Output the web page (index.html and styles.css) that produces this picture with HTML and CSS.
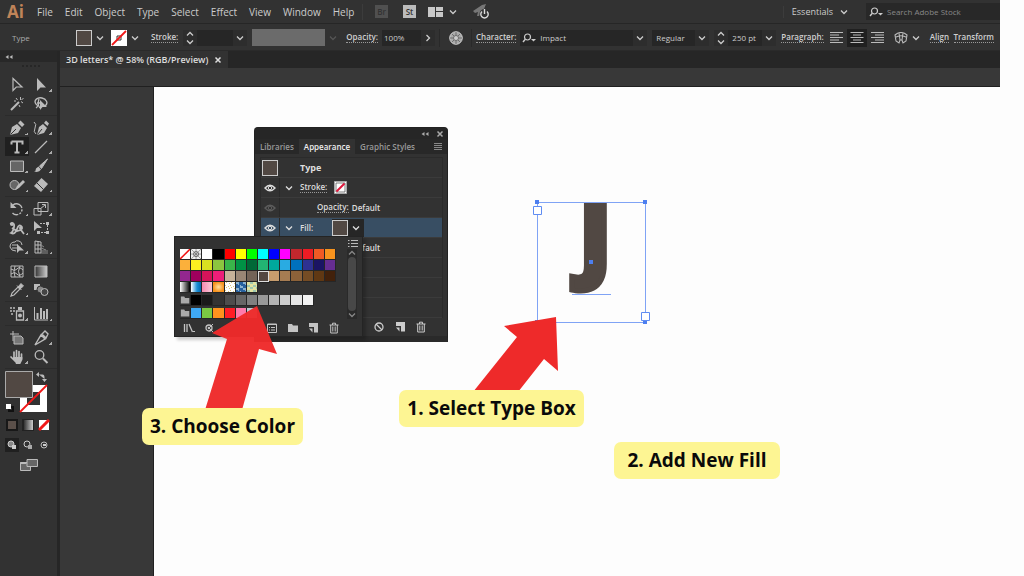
FILE: index.html
```html
<!DOCTYPE html>
<html lang="en">
<head>
<meta charset="utf-8">
<title>3D letters</title>
<link rel="stylesheet" href="styles.css">
</head>
<body>
<svg class="defs" aria-hidden="true">
  <defs>
    <linearGradient id="fade"><stop offset="0" stop-color="#333"/><stop offset="1" stop-color="#ccc"/></linearGradient>
    <symbol id="chev" viewBox="0 0 8 8"><path d="M1 2.5 4 5.5 7 2.5" fill="none" stroke="currentColor" stroke-width="1.3"/></symbol>
    <symbol id="step" viewBox="0 0 8 14"><path d="M1 4.5 4 1.5 7 4.5M1 9.5 4 12.5 7 9.5" fill="none" stroke="currentColor" stroke-width="1.3"/></symbol>
    <symbol id="lens" viewBox="0 0 14 10"><circle cx="5.5" cy="4" r="3" fill="none" stroke="currentColor" stroke-width="1.2"/><path d="M3.300 6.200 1 9" stroke="currentColor" stroke-width="1.400"/><path d="M9 6h5l-2.500 2.500z" fill="currentColor"/></symbol>
    <symbol id="eye" viewBox="0 0 12 8"><path d="M1 4Q6-1.500 11 4 6 9.500 1 4z" fill="none" stroke="currentColor" stroke-width="1.400"/><circle cx="6" cy="4" r="1.700" fill="none" stroke="currentColor"/></symbol>
    <symbol id="back" viewBox="0 0 8 6"><path d="M3.500 1v4L.5 3zM7.500 1v4l-3-2z" fill="currentColor"/></symbol>
    <symbol id="close" viewBox="0 0 8 8"><path d="M1.500 1.500l5 5M6.500 1.500l-5 5" stroke="currentColor" stroke-width="1.500"/></symbol>
    <symbol id="folder" viewBox="0 0 12 10"><path d="M1 1h4l1 1.500h5V9H1z" fill="currentColor"/></symbol>
    <symbol id="page" viewBox="0 0 12 12"><path d="M2 1h9v9.500H7V5H2z" fill="currentColor"/><path d="M2 6.500h3.500v4z" fill="currentColor"/></symbol>
    <symbol id="trash" viewBox="0 0 12 12"><path d="M1.500 3h9M4.500 3V1.200h3V3M2.700 3v8h6.600V3M4.800 4.500v5M7.200 4.500v5" fill="none" stroke="currentColor"/></symbol>
  </defs>
</svg>

<header class="menubar">
  <span class="logo">Ai</span>
  <nav class="menus" aria-label="Main menu">
    <button>File</button><button>Edit</button><button>Object</button><button>Type</button><button>Select</button><button>Effect</button><button>View</button><button>Window</button><button>Help</button>
  </nav>
  <div class="launch">
    <button class="app dim">Br</button>
    <button class="app">St</button>
    <button aria-label="Arrange documents" class="arrange"><svg width="15" height="10" viewBox="0 0 15 10"><path d="M0 0h7v10H0zM8 0h7v4H8zM8 5h7v5H8z" fill="#c8c8c8"/></svg><svg width="8" height="8"><use href="#chev"/></svg></button>
    <button aria-label="GPU performance"><svg width="18" height="16" viewBox="0 0 18 16"><path d="M1 7 10 1 14 0 12 5 7 12 5 12 6 8 3 9z" fill="#777"/><circle cx="12.500" cy="10" r="5" fill="#323232"/><path d="M10 7.500a3.700 3.700 0 1 0 5 0M12.500 5v5" fill="none" stroke="#ddd" stroke-width="1.400"/></svg></button>
  </div>
  <button class="essentials">Essentials <svg width="8" height="8"><use href="#chev"/></svg></button>
  <label class="search"><svg width="14" height="10"><use href="#lens"/></svg><input type="search" placeholder="Search Adobe Stock" aria-label="Search Adobe Stock"></label>
</header>

<div class="options">
  <span class="kind">Type</span>
  <button class="pick" aria-label="Fill"><i class="chip brown"></i><svg width="8" height="8"><use href="#chev"/></svg></button>
  <button class="pick" aria-label="Stroke colour"><svg class="none" width="16" height="16" viewBox="0 0 16 16"><path d="M0 0h16v16H0z" fill="#fff"/><path d="M6 6h4v4H6z" fill="none" stroke="#333"/><path d="M1 15 15 1" stroke="#f01818" stroke-width="1.800"/></svg><svg width="8" height="8"><use href="#chev"/></svg></button>
  <label class="cap" for="weight">Stroke:</label>
  <div class="field weight"><button aria-label="Step weight"><svg width="8" height="14"><use href="#step"/></svg></button><input id="weight"><button aria-label="Weights"><svg width="8" height="8"><use href="#chev"/></svg></button></div>
  <div class="profile"><span></span><svg width="8" height="8"><use href="#chev"/></svg></div>
  <label class="cap" for="opacity">Opacity:</label>
  <div class="field opacity"><input id="opacity" value="100%"><button aria-label="More opacity"><svg class="right" width="8" height="8"><use href="#chev"/></svg></button></div>
  <button class="globe" aria-label="Recolor artwork"><svg width="14" height="14" viewBox="0 0 14 14"><circle cx="7" cy="7" r="6.300" fill="#aaa" stroke="#ccc"/><path d="M7 1v12M1 7h12M3 3l8 8M11 3l-8 8" stroke="#555" stroke-width=".7"/><circle cx="7" cy="7" r="2.500" fill="#ccc" stroke="#555" stroke-width=".7"/></svg></button>
  <label class="cap" for="font">Character:</label>
  <div class="field font"><svg width="14" height="10"><use href="#lens"/></svg><input id="font" value="Impact"><button aria-label="Fonts"><svg width="8" height="8"><use href="#chev"/></svg></button></div>
  <div class="field style"><select aria-label="Font style"><option>Regular</option></select><span class="drop"><svg width="8" height="8"><use href="#chev"/></svg></span></div>
  <div class="field size"><button aria-label="Step size"><svg width="8" height="14"><use href="#step"/></svg></button><input aria-label="Font size" value="250 pt"><button aria-label="Sizes"><svg width="8" height="8"><use href="#chev"/></svg></button></div>
  <button class="cap">Paragraph:</button>
  <div class="aligns">
    <button aria-label="Align left"><svg width="14" height="12" viewBox="0 0 14 12"><path d="M0 .5h13M0 3h9M0 5.500h13M0 8h9M0 10.500h13" stroke="#bbb"/></svg></button>
    <button aria-label="Align centre" class="on"><svg width="14" height="12" viewBox="0 0 14 12"><path d="M.5 .5h13M3 3h8M.5 5.500h13M3 8h8M.5 10.500h13" stroke="#bbb"/></svg></button>
    <button aria-label="Align right"><svg width="14" height="12" viewBox="0 0 14 12"><path d="M1 .5h13M5 3h9M1 5.500h13M5 8h9M1 10.500h13" stroke="#bbb"/></svg></button>
  </div>
  <button class="warp" aria-label="Envelope"><svg width="14" height="12" viewBox="0 0 14 12"><path d="M1 3Q7-2 13 3L12 9 9 11 8 8H6L5 11 2 9zM5 1 6 8M9 1 8 8M1 5.500Q7 2 13 5.500" fill="none" stroke="#bbb" stroke-width="1.100"/></svg><svg width="8" height="8"><use href="#chev"/></svg></button>
  <button class="cap">Align</button>
  <button class="cap">Transform</button>
</div>

<main class="work">
  <aside class="tools">
    <div class="collapse"><svg width="8" height="6"><use href="#back"/></svg></div>
    <div class="grip"></div>
    <div class="group">
      <button aria-label="Selection"><svg viewBox="0 0 16 16"><path d="M4 1.500v12l3.300-3.500H13z" fill="none" stroke="currentColor" stroke-width="1.200"/></svg></button>
      <button aria-label="Direct selection" class="more"><svg viewBox="0 0 16 16"><path d="M4 1v13l3.500-3.500H13z" fill="currentColor"/></svg></button>
      <button aria-label="Magic wand"><svg viewBox="0 0 16 16"><path d="M2 14 10 6" stroke="currentColor" stroke-width="2"/><path d="M11.500 1v3M14 7l-2-1.500M7 2l1.500 2M14.500 2l-2 2M5 5h2M10 9l1 2" stroke="currentColor"/></svg></button>
      <button aria-label="Lasso"><svg viewBox="0 0 16 16"><path d="M3 12Q6 10 3 8C0 4 5 1 9 2S16 7 12 10M6 3Q4 9 7 12M4 7h5" fill="none" stroke="currentColor" stroke-width="1.300"/><path d="M7 4v10l2.500-3H14z" fill="currentColor"/></svg></button>
    </div>
    <div class="group">
      <button aria-label="Pen" class="more"><svg viewBox="0 0 16 16"><path d="M1 15 3 7 8 4l4 4-3 5zM9 3l2.500-2.500 4 4L13 7z" fill="currentColor"/><path d="M1.500 14.500 7 9" stroke="#323232"/></svg></button>
      <button aria-label="Curvature" class="more"><svg viewBox="0 0 16 16"><path d="M4 15 6 7l4-3 4 4-3 5zM11 3l2-2.500 3 3L14.500 6z" fill="currentColor"/><path d="M4.500 14.500 9 9" stroke="#323232"/><path d="M1 2Q4 4 2 8T3 14" fill="none" stroke="currentColor"/></svg></button>
      <button aria-label="Type" class="more on"><svg viewBox="0 0 16 16"><path d="M2.500 2.500h11v3M2.500 2.500v3M8 2.500v11M5.500 13.500h5" fill="none" stroke="currentColor" stroke-width="2"/></svg></button>
      <button aria-label="Line segment" class="more"><svg viewBox="0 0 16 16"><path d="M2 14 14 2" stroke="currentColor" stroke-width="1.300"/></svg></button>
      <button aria-label="Rectangle" class="more"><svg viewBox="0 0 16 16"><path d="M1.500 3h13v10.500h-13z" fill="#666" stroke="currentColor"/></svg></button>
      <button aria-label="Paintbrush" class="more"><svg viewBox="0 0 16 16"><path d="M14.500 1 6.500 8l2 2.500z" fill="currentColor" stroke="currentColor"/><path d="M5.500 8.500l2.500 3Q6 15 1 13.500q2-.5 2-3z" fill="currentColor"/></svg></button>
      <button aria-label="Shaper" class="more"><svg viewBox="0 0 16 16"><circle cx="5.500" cy="8" r="4.500" fill="#666" stroke="currentColor"/><path d="M6 13 8 9l6-6 2 2-6 6z" fill="currentColor"/></svg></button>
      <button aria-label="Eraser" class="more"><svg viewBox="0 0 16 16"><path d="M8.500 1 15 7 8 15 1 9z" fill="currentColor"/><path d="M4 6 10.500 12.500" stroke="#323232"/></svg></button>
    </div>
    <div class="group">
      <button aria-label="Rotate" class="more"><svg viewBox="0 0 16 16"><path d="M4 4a5.500 5.500 0 1 1-.5 8" fill="none" stroke="currentColor" stroke-width="1.400" stroke-dasharray="11 1.300 2 1.300 2 1.300"/><path d="M1.500 1v6h6z" fill="currentColor"/></svg></button>
      <button aria-label="Scale" class="more"><svg viewBox="0 0 16 16"><path d="M5 1.500h10v9H5zM1 7.500h7V14H1zM7 8l5-4M9 3.500h3.500V7" fill="none" stroke="currentColor"/></svg></button>
      <button aria-label="Width" class="more"><svg viewBox="0 0 16 16"><path d="M1 4Q6 2 5 7T2 13Q6 15 8 9T13 7M3 8l5 3 4-1 3 4" fill="none" stroke="currentColor" stroke-width="1.800"/><circle cx="3" cy="4" r="2" fill="currentColor"/><circle cx="12" cy="8" r="2" fill="currentColor"/></svg></button>
      <button aria-label="Free transform"><svg viewBox="0 0 16 16"><path d="M1 1v10l3-3h5z" fill="currentColor"/><path d="M7 3.500h7.500v9H5" fill="none" stroke="currentColor" stroke-dasharray="2 1"/><path d="M13 2h3v3h-3zM13 11h3v3h-3zM4 11h3v3H4z" fill="currentColor"/></svg></button>
      <button aria-label="Shape builder" class="more"><svg viewBox="0 0 16 16"><path d="M1 8q0-5 5-5 1-2 4-1 3 1 3 4" fill="none" stroke="currentColor"/><path d="M1 8q1 4 6 4M3 6h6M3 9h5" fill="none" stroke="currentColor"/><path d="M8 5v9l2.500-2.500H15z" fill="currentColor"/></svg></button>
      <button aria-label="Perspective grid" class="more"><svg viewBox="0 0 16 16"><path d="M2 2l6 1v11H2zM2 6h6M2 10h6M5 2v12" fill="none" stroke="currentColor"/><path d="M8 6l3 2M8 9l5 2M8 12h7M8 14h7" fill="none" stroke="#888"/></svg></button>
    </div>
    <div class="group">
      <button aria-label="Mesh"><svg viewBox="0 0 16 16"><path d="M2 3h12v11H2zM2 6q4 3 6 0t6 1M2 11q4-3 6 0t6-1M6 3q-2 5 0 11M11 3q-3 5 0 11" fill="none" stroke="currentColor"/></svg></button>
      <button aria-label="Gradient"><svg viewBox="0 0 16 16"><path d="M2 3h12v11H2z" fill="url(#fade)" stroke="currentColor"/></svg></button>
      <button aria-label="Eyedropper" class="more"><svg viewBox="0 0 16 16"><path d="M2 14 3 11 9 5l2 2-6 6z" fill="none" stroke="currentColor" stroke-width="1.200"/><path d="M8 3.500 12.500 8 M9 5l3-3.500 2.500 2.500L11 7z" fill="currentColor" stroke="currentColor"/></svg></button>
      <button aria-label="Blend"><svg viewBox="0 0 16 16"><path d="M1 2h6v6H1z" fill="currentColor"/><circle cx="7.500" cy="7.500" r="3.500" fill="#888" stroke="#323232"/><circle cx="11.500" cy="10" r="3.500" fill="#444" stroke="currentColor"/></svg></button>
    </div>
    <div class="group">
      <button aria-label="Symbol sprayer" class="more"><svg viewBox="0 0 16 16"><path d="M1 2h2M4 2h2M1 5h2M4 5h2M2 8h2" stroke="currentColor" stroke-width="1.500"/><path d="M9 1h4v3H9z" fill="currentColor"/><path d="M7.500 5h7v9h-7z" fill="none" stroke="currentColor" stroke-width="1.300"/><circle cx="11" cy="9.500" r="2" fill="currentColor"/></svg></button>
      <button aria-label="Column graph" class="more"><svg viewBox="0 0 16 16"><path d="M1.500 1v13H15" fill="none" stroke="currentColor"/><path d="M4.500 13V7M8 13V2M11 13V5M14 13V3" stroke="currentColor" stroke-width="2"/></svg></button>
    </div>
    <div class="group">
      <button aria-label="Artboard"><svg viewBox="0 0 16 16"><path d="M4 1v10M1 4h9" stroke="currentColor"/><path d="M5 6h7l2 2v6H5z" fill="#777" stroke="currentColor"/></svg></button>
      <button aria-label="Slice" class="more"><svg viewBox="0 0 16 16"><path d="M2 15 8 5l4 4zM9 4l3-3 3 3-2 4z" fill="none" stroke="currentColor" stroke-width="1.400"/></svg></button>
      <button aria-label="Hand" class="more"><svg viewBox="0 0 16 16"><path d="M5 10V3M7.500 9V1.500M10 9V2.500M12.500 10V5M2 8l4 4" stroke="currentColor" stroke-width="1.700" stroke-linecap="round"/><path d="M4 8h9.300v3l-2 4H7z" fill="currentColor"/></svg></button>
      <button aria-label="Zoom"><svg viewBox="0 0 16 16"><circle cx="6.500" cy="6" r="4.300" fill="none" stroke="currentColor" stroke-width="1.300"/><path d="M10 9.500 14.500 14" stroke="currentColor" stroke-width="2"/></svg></button>
    </div>
    <svg class="paint" viewBox="0 0 46 44">
      <path d="M37 4.500h3.500q2 0 2 3V9M37 2l-3 2.500 3 2.500zM40 9h5l-2.500 3z" fill="#bbb"/><path d="M37 5h3q2 0 2 3" fill="none" stroke="#323232" stroke-width="0"/>
      <path d="M18 15h27v27H18z" fill="#fff"/><path d="M25 22h13v13H25z" fill="#323232"/>
      <path d="M18 42 45 15" stroke="#f01818" stroke-width="1.800"/>
      <path d="M3.500 1.500h27v26h-27z" fill="#514843" stroke="#aaa"/>
      <path d="M7 37h4v4H7z" fill="none" stroke="#111" stroke-width="2"/><path d="M4 34h5v5H4z" fill="#fff"/>
    </svg>
    <div class="modes">
      <button aria-label="Color"><svg viewBox="0 0 12 12"><path d="M0 0h12v12H0z" fill="#181818"/><path d="M2 2h8v8H2z" fill="#5b504a"/></svg></button>
      <button aria-label="Gradient fill"><svg viewBox="0 0 12 12"><path d="M0 0h12v12H0z" fill="#222"/><path d="M2 1h9v10H2z" fill="url(#fade)"/></svg></button>
      <button aria-label="No fill"><svg viewBox="0 0 12 12"><path d="M1 1h10v10H1z" fill="#fff"/><path d="M1 11 11 1" stroke="#f01818" stroke-width="3"/></svg></button>
    </div>
    <div class="modes">
      <button aria-label="Draw normal" class="on"><svg viewBox="0 0 12 12"><circle cx="5" cy="5" r="3" fill="#888" stroke="#ccc"/><path d="M6 6h4v4H6z" fill="#ccc"/></svg></button>
      <button aria-label="Draw behind"><svg viewBox="0 0 12 12"><circle cx="5" cy="5" r="3" fill="#323232" stroke="#ccc"/><path d="M6 6h4v4H6z" fill="#aaa"/></svg></button>
      <button aria-label="Draw inside"><svg viewBox="0 0 12 12"><circle cx="6" cy="6" r="3" fill="none" stroke="#bbb"/><path d="M5 5h3v2H5z" fill="#ccc"/></svg></button>
    </div>
    <button class="screens" aria-label="Screen mode"><svg width="18" height="14" viewBox="0 0 18 14"><path d="M.5 4.500h10v8H.5z" fill="#666" stroke="#bbb"/><path d="M.5 5h6" stroke="#bbb" stroke-width="2"/><path d="M7 1.500h10.500v7H7z" fill="#666" stroke="#bbb"/></svg></button>
  </aside>

  <section class="doc">
    <div class="tabs"><div class="tab">3D letters* @ 58% (RGB/Preview)<button aria-label="Close document"><svg width="8" height="8"><use href="#close"/></svg></button></div></div>
    <div class="canvas"><div class="artboard"></div></div>
  </section>
</main>

<div class="glyph">J</div>
<svg class="frame" viewBox="0 0 116 128">
  <path d="M5.500 4.500h108v120H5.500z" fill="none" stroke="#7fa3f5"/>
  <path d="M40 96.500h39" stroke="#7fa3f5"/>
  <path d="M3 2h4v4H3zM111 2h4v4h-4zM3 122h4v4H3zM111 122h4v4h-4zM57 62h4v4h-4z" fill="#4d7ff0"/>
  <path d="M1.500 8.500h8v8h-8zM109.500 114.500h8v8h-8z" fill="#fff" stroke="#5f8cf2"/>
</svg>

<section class="panel" aria-label="Appearance">
  <div class="bar"><svg width="8" height="6"><use href="#back"/></svg><svg width="8" height="8"><use href="#close"/></svg></div>
  <div class="ptabs"><button>Libraries</button><button class="on">Appearance</button><button>Graphic Styles</button><svg width="8" height="8" viewBox="0 0 8 8"><path d="M0 .5h8M0 2.500h8M0 4.500h8M0 6.500h8" stroke="#888"/></svg></div>
  <div class="rows">
    <div class="row first"><i class="chip brown"></i><span class="title">Type</span></div>
    <div class="row"><span class="eye"><svg width="12" height="8"><use href="#eye"/></svg></span><svg class="tw" width="8" height="8"><use href="#chev"/></svg><span class="under">Stroke:</span><svg class="nostroke" width="13" height="13" viewBox="0 0 13 13"><path d="M.5.500h12v12H.5z" fill="#fff" stroke="#aaa"/><path d="M2 2h9v9H2z" fill="#fff" stroke="#444" stroke-width=".7"/><path d="M2.500 10.500l8-8" stroke="#e0163c" stroke-width="2"/></svg></div>
    <div class="row"><span class="eye off"><svg width="12" height="8"><use href="#eye"/></svg></span><span class="under opac">Opacity:</span><span>Default</span></div>
    <div class="row sel"><span class="eye"><svg width="12" height="8"><use href="#eye"/></svg></span><svg class="tw" width="8" height="8"><use href="#chev"/></svg><span>Fill:</span><button class="fillpick" aria-label="Fill colour"><i class="chip brown"></i><svg width="8" height="8"><use href="#chev"/></svg></button></div>
    <div class="row"><span class="eye off"></span><span class="under opac">Opacity:</span><span>Default</span></div>
    <div class="row"></div><div class="row"></div><div class="row"></div>
  </div>
  <div class="foot">
    <button aria-label="Clear appearance"><svg width="12" height="12" viewBox="0 0 12 12"><circle cx="6" cy="6" r="4" fill="none" stroke="currentColor" stroke-width="1.300"/><path d="M3 3l6 6" stroke="currentColor" stroke-width="1.300"/></svg></button>
    <button aria-label="Duplicate item"><svg width="12" height="12"><use href="#page"/></svg></button>
    <button aria-label="Delete item"><svg width="12" height="12"><use href="#trash"/></svg></button>
  </div>
</section>

<section class="swatches" aria-label="Swatches">
  <div class="smenu"><svg width="10" height="8" viewBox="0 0 10 8"><path d="M0 1.500h1.500M0 4.500h1.500M0 7.500h1.500M3 1.500h7M3 4.500h7M3 7.500h7" stroke="#bbb"/></svg></div>
  <div class="sbody">
    <div class="slist" id="slist"></div>
    <div class="scroll"><svg width="8" height="8" class="up"><use href="#chev"/></svg><i></i><svg width="8" height="8"><use href="#chev"/></svg></div>
  </div>
  <div class="sfoot">
    <button aria-label="Swatch libraries"><svg width="12" height="12" viewBox="0 0 12 12"><path d="M1.500 2v8M4 2v8M6 2l3.500 8" stroke="currentColor" stroke-width="1.300"/><path d="M10 9h2v1h-2z" fill="currentColor"/></svg></button>
    <button aria-label="Color themes"><svg width="12" height="12" viewBox="0 0 12 12"><circle cx="5" cy="6" r="3" fill="none" stroke="currentColor" stroke-width="1.300"/><path d="M5 6l4-4M5 6l4 4" stroke="currentColor"/><circle cx="5" cy="6" r="1.300" fill="currentColor"/></svg></button>
    <button aria-label="Add to library"></button>
    <button aria-label="Show kinds"></button>
    <button aria-label="Swatch options"><svg width="12" height="12" viewBox="0 0 12 12"><path d="M1.500 2h9v8.500h-9z" fill="none" stroke="currentColor"/><path d="M1.500 2.500h9M3 5.500h1M3 8h1M5 5.500h4M5 8h4" stroke="currentColor"/></svg></button>
    <button aria-label="New group"><svg width="12" height="10"><use href="#folder"/></svg></button>
    <button aria-label="New swatch"><svg width="12" height="12"><use href="#page"/></svg></button>
    <button aria-label="Delete swatch"><svg width="12" height="12"><use href="#trash"/></svg></button>
  </div>
</section>

<svg class="arrow choose" viewBox="0 0 72 106"><path d="M52 2 7 29l15 6L0 106h37l17-61 18 5z" fill="#ee2a2a" opacity=".97"/></svg>
<svg class="arrow select" viewBox="0 0 88 76"><path d="M83 1 31 10l13 11L0 76h45l26-33 14 12z" fill="#ee2a2a"/></svg>
<div class="note n1">1. Select Type Box</div>
<div class="note n2">2. Add New Fill</div>
<div class="note n3">3. Choose Color</div>
<script src="script.js"></script>
</body>
</html>
```
FILE: styles.css
```css
* { box-sizing: border-box; }
body {
  position: relative;
  display: flex;
  flex-direction: column;
  min-height: 100vh;
  margin: 0;
  background: #fdfdfd;
  color: #ccc;
  font: 8px/12px "Open Sans", "Noto Sans", sans-serif;
  overflow: hidden;
}
.defs { position: absolute; width: 0; height: 0; }
svg { display: block; flex: none; }
button, input, select {
  font: inherit;
  color: inherit;
  background: none;
  border: 0;
  padding: 0;
  margin: 0;
  min-width: 0;
  outline: 0;
  appearance: none;
}
button { display: flex; align-items: center; justify-content: center; }

.menubar, .options {
  display: flex;
  align-items: center;
  margin-right: 24px;
  background: #323232;
}
.menubar { height: 24px; border-bottom: 1px solid #262626; font-size: 10px; }
.logo { width: 37px; padding-left: 7px; color: #c08459; font: bold 17px/22px "Open Sans", sans-serif; }
.menus { display: flex; gap: 12px; width: 325px; }
.launch { display: flex; align-items: center; gap: 15px; padding-left: 12px; border-left: 1px solid #3c3c3c; }
.app { width: 13px; height: 13px; background: #bbb; color: #333; font-size: 8px; font-weight: 600; }
.app.dim { background: #505050; color: #333; }
.arrange { gap: 6px; margin-left: -3px; }
.essentials { gap: 7px; margin-left: auto; padding: 0 18px 0 8px; border-left: 1px solid #3c3c3c; font-size: 9px; }
.search { display: flex; align-items: center; gap: 4px; width: 134px; height: 17px; padding-left: 3px; background: #282828; font-size: 8px; }
.search input { width: 100px; }
.search input::placeholder { color: #888; }

.options { height: 27px; padding: 1px 6px 0 12px; border-bottom: 1px solid #2a2a2a; }
.kind { width: 64px; color: #aaa; }
.chip { display: block; flex: none; width: 16px; height: 16px; border: 1px solid #ccc; }
.brown { background: #514843; }
.pick { width: 35px; height: 18px; gap: 4px; padding-right: 7px; }
.cap { color: #d0d0d0; font-weight: 600; line-height: 10px; border-bottom: 1px dotted #999; white-space: nowrap; }
.pick + .cap { margin-left: 5px; }
.field { display: flex; align-items: center; height: 16px; background: #262626; }
.field button, .drop { display: flex; align-items: center; justify-content: center; width: 14px; height: 16px; background: #2d2d2d; }
.field input, .field select { flex: 1; width: 20px; padding: 0 4px; }
.weight { width: 64px; margin-left: 5px; }
.profile { display: flex; align-items: center; gap: 4px; margin: 0 9px 0 5px; color: #555; }
.profile span { width: 73px; height: 17px; background: #6b6b6b; }
.opacity { width: 53px; margin-left: 4px; }
.opacity input { padding: 0 2px; }
.right { transform: rotate(-90deg); }
.globe { width: 33px; margin: 0 4px; border: solid #292929; border-width: 0 1px; height: 18px; }
.font { width: 127px; margin-left: 4px; padding-left: 2px; }
.style { width: 57px; margin: 0 5px; }
.size { width: 62px; margin-right: 5px; }
.aligns { display: flex; margin-left: 3px; }
.aligns button { width: 20px; height: 18px; }
.aligns .on { background: #202020; }
.warp { gap: 4px; margin: 0 10px 0 7px; }
.warp + .cap { margin-right: auto; }

.work { display: flex; flex: 1; }
.tools { width: 60px; padding-left: 5px; background: #323232; border-right: 3px solid #262626; color: #bbb; }
.collapse { height: 11px; margin-left: -5px; padding: 3px 5px; background: #282828; }
.grip { height: 5px; width: 18px; margin: 0 auto; border-bottom: 2px dotted #262626; }
.group { display: grid; grid-template-columns: 24px 24px; grid-auto-rows: 19px; padding: 2px 0; border-bottom: 1px solid #2b2b2b; }
.grip + .group { padding-top: 8px; }
.group button { position: relative; }
.group svg { width: 16px; height: 16px; }
.group .on, .modes .on { background: #202020; }
.more::after { content: ""; position: absolute; right: 1px; bottom: 2px; width: 3px; height: 3px; background: linear-gradient(135deg, transparent 50%, #aaa 50%); }
.paint { width: 46px; height: 44px; margin: 1px 0 1px -3px; }
.modes { display: flex; gap: 2px; height: 20px; align-items: center; }
.modes button { width: 14px; height: 14px; }
.modes svg { width: 12px; height: 12px; }
.screens { width: 48px; height: 20px; }

.doc { display: flex; flex: 1; flex-direction: column; }
.tabs { height: 17px; margin-right: 24px; background: #262626; }
.tab { display: inline-flex; align-items: center; gap: 6px; height: 17px; padding: 0 6px; background: #323232; color: #ddd; font-size: 9px; font-weight: 600; white-space: nowrap; }
.canvas {
  display: flex;
  flex: 1;
  padding: 19px 0 0 93px;
  background: linear-gradient(#383838 18px, #202020 18px, #202020 19px, #383838 19px) left / calc(100% - 24px) no-repeat;
}
.artboard { flex: 1; background: #fdfdfd; border-left: 1px solid #202020; }

.glyph { position: absolute; left: 579px; top: 175px; color: #514843; font: 800 92px/120px "Open Sans", sans-serif; -webkit-text-stroke: 5px #514843; }
.frame { position: absolute; left: 532px; top: 198px; width: 116px; height: 128px; overflow: visible; }

.panel { position: absolute; left: 254px; top: 127px; width: 194px; background: #323232; border: 1px solid #222; border-bottom: 6px solid #2a2a2a; border-radius: 4px 4px 0 0; font-weight: 600; }
.bar { display: flex; justify-content: flex-end; align-items: center; gap: 7px; height: 11px; padding-right: 3px; background: #262626; color: #aaa; }
.ptabs { display: flex; align-items: center; height: 15px; padding-right: 5px; background: #282828; color: #999; }
.ptabs button { height: 15px; padding: 0 5px; }
.ptabs .on { background: #323232; color: #eee; }
.ptabs svg { margin-left: auto; }
.rows { margin: 3px 4px 0 5px; border: 1px solid #2b2b2b; border-bottom: 0; }
.row { display: flex; align-items: center; height: 20px; border-bottom: 1px solid #3b3b3b; color: #ddd; }
.row.first { padding-left: 1px; }
.title { margin-left: 22px; font-size: 9px; font-weight: 700; }
.eye { display: flex; align-items: center; justify-content: center; width: 19px; height: 19px; border-right: 1px solid #2a2a2a; }
.eye.off { color: #5c5c5c; }
.tw { margin: 0 7px 0 5px; }
.under { line-height: 10px; border-bottom: 1px dotted #999; }
.opac { margin: 0 3px 0 37px; }
.nostroke { margin-left: 7px; }
.sel { background: #384e63; }
.fillpick { margin-left: 19px; gap: 4px; height: 18px; padding-right: 4px; background: #262626; }
.foot { display: flex; justify-content: flex-end; gap: 9px; height: 18px; padding-right: 20px; color: #ccc; }

.swatches { position: absolute; left: 174px; top: 236px; width: 189px; background: #323232; border: 1px solid #242424; box-shadow: 3px 3px 3px #0003; }
.smenu { display: flex; justify-content: flex-end; height: 12px; padding: 2px 4px; }
.sbody { display: flex; padding-left: 5px; }
.slist { width: 156px; }
.sline { display: grid; grid-template-columns: repeat(14, 1fr); height: 11px; }
.sline.grouped { margin-top: 2px; }
.sw { border: solid #262626; border-width: 0 1px 1px 0; }
.sw.picked { border: 1px solid #ddd; outline: 1px solid #222; }
.sw svg { width: 100%; height: 100%; }
.scroll { display: flex; flex-direction: column; align-items: center; width: 10px; margin-left: 11px; background: #2a2a2a; color: #888; }
.scroll i { flex: 1; width: 8px; border-radius: 4px; background: #484848; }
.up { transform: rotate(180deg); }
.sfoot { display: flex; align-items: center; justify-content: space-between; height: 17px; margin: 0 22px 0 8px; color: #c4c4c4; }
.sfoot button { width: 12px; height: 12px; }

.arrow { position: absolute; }
.choose { left: 205px; top: 304px; width: 72px; height: 106px; }
.select { left: 473px; top: 316px; width: 88px; height: 76px; }
.note { position: absolute; padding: 5px 8px; border-radius: 7px; background: #fdf593; color: #0a0a0a; font: bold 19px/27px "Open Sans", sans-serif; white-space: nowrap; text-align: center; }
.n1 { left: 399px; top: 390px; width: 185px; }
.n2 { left: 614px; top: 442px; width: 166px; }
.n3 { left: 142px; top: 408px; width: 161px; }
```
FILE: script.js
```js
const lines = [
  ["none", "reg", "#fff", "#000", "#f00", "#ff0", "#0f0", "#0ff", "#00f", "#f0f", "#c1272d", "#ed1c24", "#f15a24", "#f7931e"],
  ["#fbb03b", "#fcee21", "#d9e021", "#8cc63f", "#39b54a", "#009245", "#006837", "#22b573", "#00a99d", "#29abe2", "#0071bc", "#2e3192", "#1b1464", "#662d91"],
  ["#93278f", "#9e005d", "#d4145a", "#ed1e79", "#c7b299", "#998675", "#736357", "#534741", "#c69c6d", "#a67c52", "#8c6239", "#754c24", "#603813", "#42210b"],
  ["linear-gradient(90deg,#fff,#000)", "linear-gradient(90deg,#fff,#1b8fd6 60%,#0068b0)", "linear-gradient(90deg,#f589b0,#f9c9d8)", "radial-gradient(#ffe0a0,#f7931e 70%)", "repeating-conic-gradient(#fff 0 15%,#d9c777 0 25%) 0 0/5px 5px", "repeating-conic-gradient(#27619e 0 30%,#8cb3cf 0 50%) 0 0/7px 6px", "repeating-conic-gradient(#9fc9b0 0 25%,#e3e3a0 0 50%) 0 0/6px 5px"],
  ["folder", "#000", "#1a1a1a", "#333", "#4d4d4d", "#666", "#808080", "#999", "#b3b3b3", "#ccc", "#e6e6e6", "#f2f2f2"],
  ["folder", "#3fa9f5", "#7ac943", "#ff931e", "#ff1d25", "#ff7bac", "#bdccd4"]
];
const art = {
  none: '<svg viewBox="0 0 10 10"><path d="M0 0h10v10H0z" fill="#fff"/><path d="M0 10 10 0" stroke="#e11" stroke-width="1.5"/></svg>',
  reg: '<svg viewBox="0 0 10 10"><path d="M0 0h10v10H0z" fill="#eee"/><circle cx="5" cy="5" r="2.500" fill="none" stroke="#555" stroke-width=".8"/><path d="M0 5h10M5 0v10M0 0l10 10M10 0 0 10" stroke="#555" stroke-width=".5"/></svg>',
  folder: '<svg viewBox="0 0 12 10"><use href="#folder" width="12" height="10" color="#aaa"/></svg>'
};
const list = document.getElementById("slist");
for (const line of lines) {
  const row = document.createElement("div");
  row.className = line[0] === "folder" ? "sline grouped" : "sline";
  for (const value of line) {
    const cell = document.createElement("span");
    cell.className = value === "#534741" ? "sw picked" : "sw";
    if (art[value]) cell.innerHTML = art[value];
    else cell.style.background = value;
    row.append(cell);
  }
  list.append(row);
}
```
